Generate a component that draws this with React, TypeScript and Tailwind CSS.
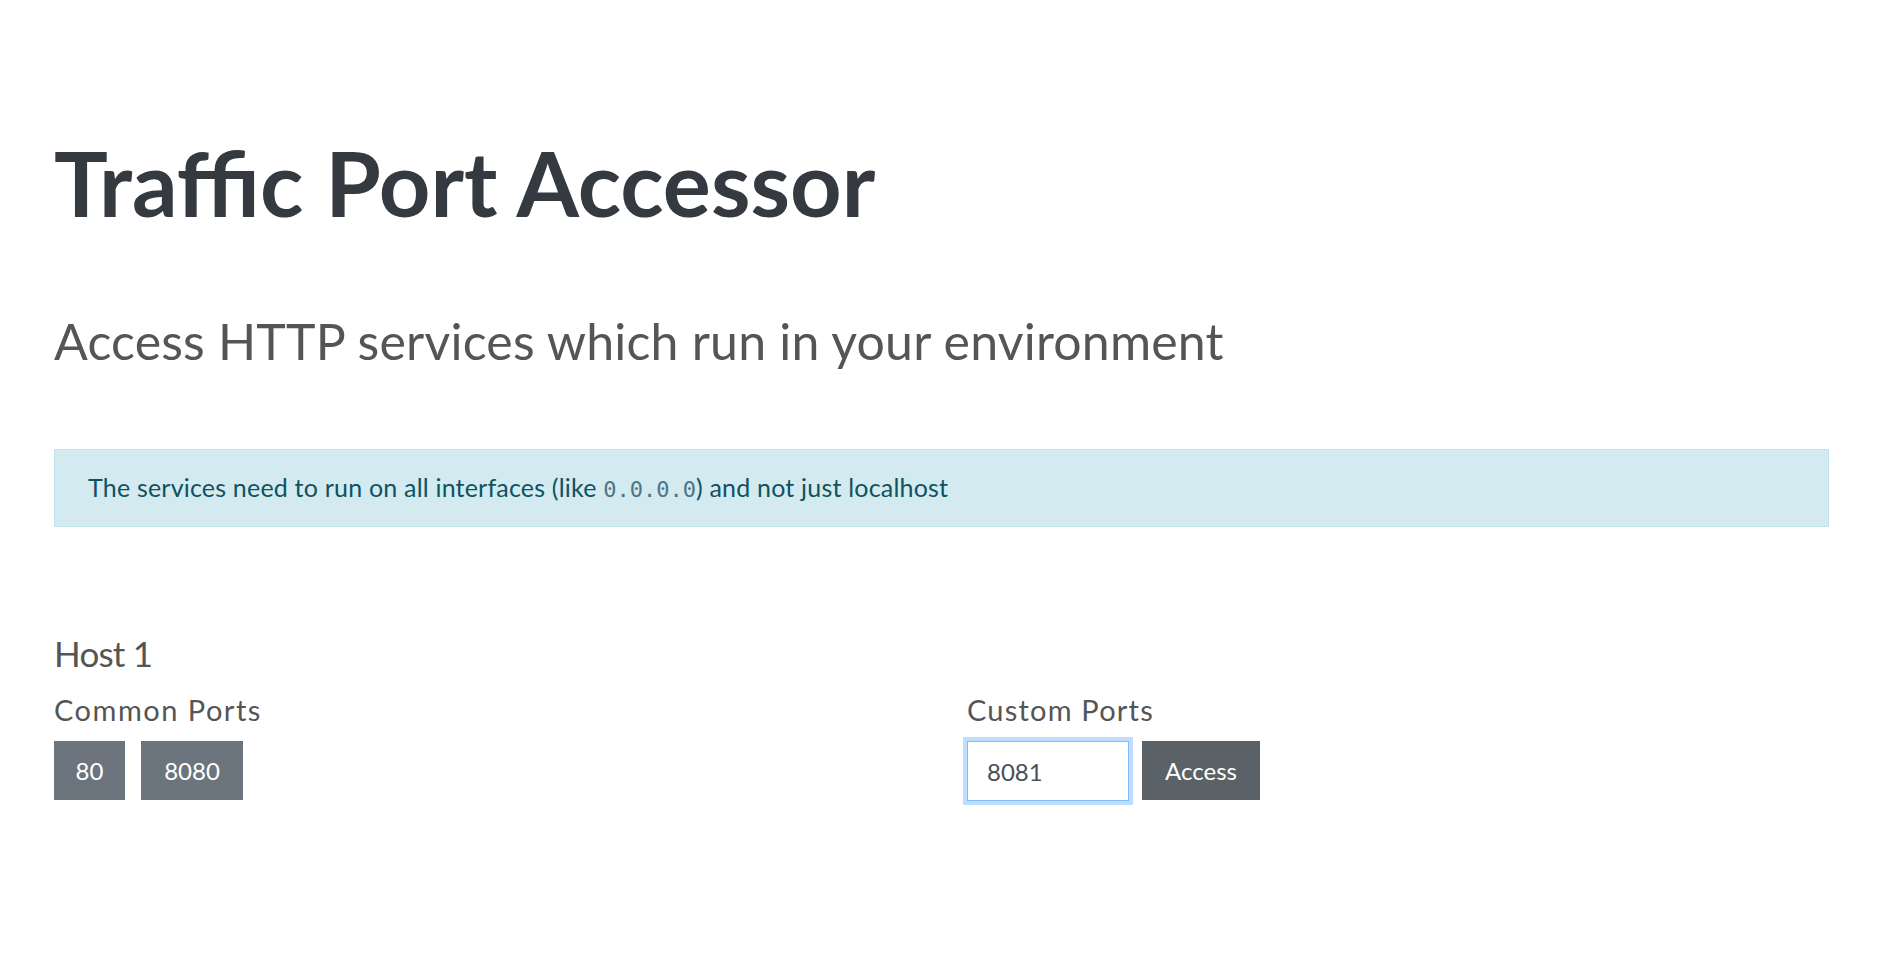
import React from 'react';

const font = { fontFamily: 'Lato, "Noto Sans", sans-serif' };
const mono = { fontFamily: '"DejaVu Sans Mono", monospace' };

const ports = [
  { label: '80', cls: 'w-[71px]' },
  { label: '8080', cls: 'w-[102px]' },
];

export default function App() {
  return (
    <div className="min-h-screen bg-white px-[54px] pr-[57px]" style={font}>
      <h1 className="pt-[137px] text-[90px] font-bold leading-none text-[#343a40]">Traffic Port Accessor</h1>
      <p className="mt-[89px] text-[50px] leading-none font-normal tracking-[0.2px] text-[#555]">
        Access HTTP services which run in your environment
      </p>

      <div className="mt-[83px] flex h-[78px] items-center border border-[#bee5eb] bg-[#d3eaf0] px-[33px] text-[25px] tracking-[0.2px] text-[#0f5261]">
        <span>
          The services need to run on all interfaces (like{' '}
          <code className="text-[22px] tracking-normal text-[#4d7585]" style={mono}>0.0.0.0</code>
          ) and not just localhost
        </span>
      </div>

      <div className="mt-[109px] text-[35px] leading-none tracking-[-0.8px] text-[#555]">Host 1</div>

      <div className="mt-[24px] grid grid-cols-2 gap-x-[51px]">
        <div>
          <div className="text-[29px] leading-none tracking-[1.5px] text-[#555]">Common Ports</div>
          <div className="mt-[17px] flex gap-4">
            {ports.map((p) => (
              <button key={p.label} className={`${p.cls} h-[59px] bg-[#6c757d] text-[24px] text-white`}>
                {p.label}
              </button>
            ))}
          </div>
        </div>
        <div>
          <div className="text-[29px] leading-none tracking-[1.2px] text-[#555]">Custom Ports</div>
          <div className="mt-[17px] flex gap-[13px]">
            <input
              defaultValue="8081"
              className="h-[60px] w-[162px] border border-[#80bdff] bg-white px-[19px] text-[24px] text-[#495057] shadow-[0_0_0_4px_rgba(0,123,255,0.25)] outline-none"
            />
            <button className="h-[59px] w-[118px] bg-[#5a6268] text-[24px] text-white">Access</button>
          </div>
        </div>
      </div>
    </div>
  );
}
